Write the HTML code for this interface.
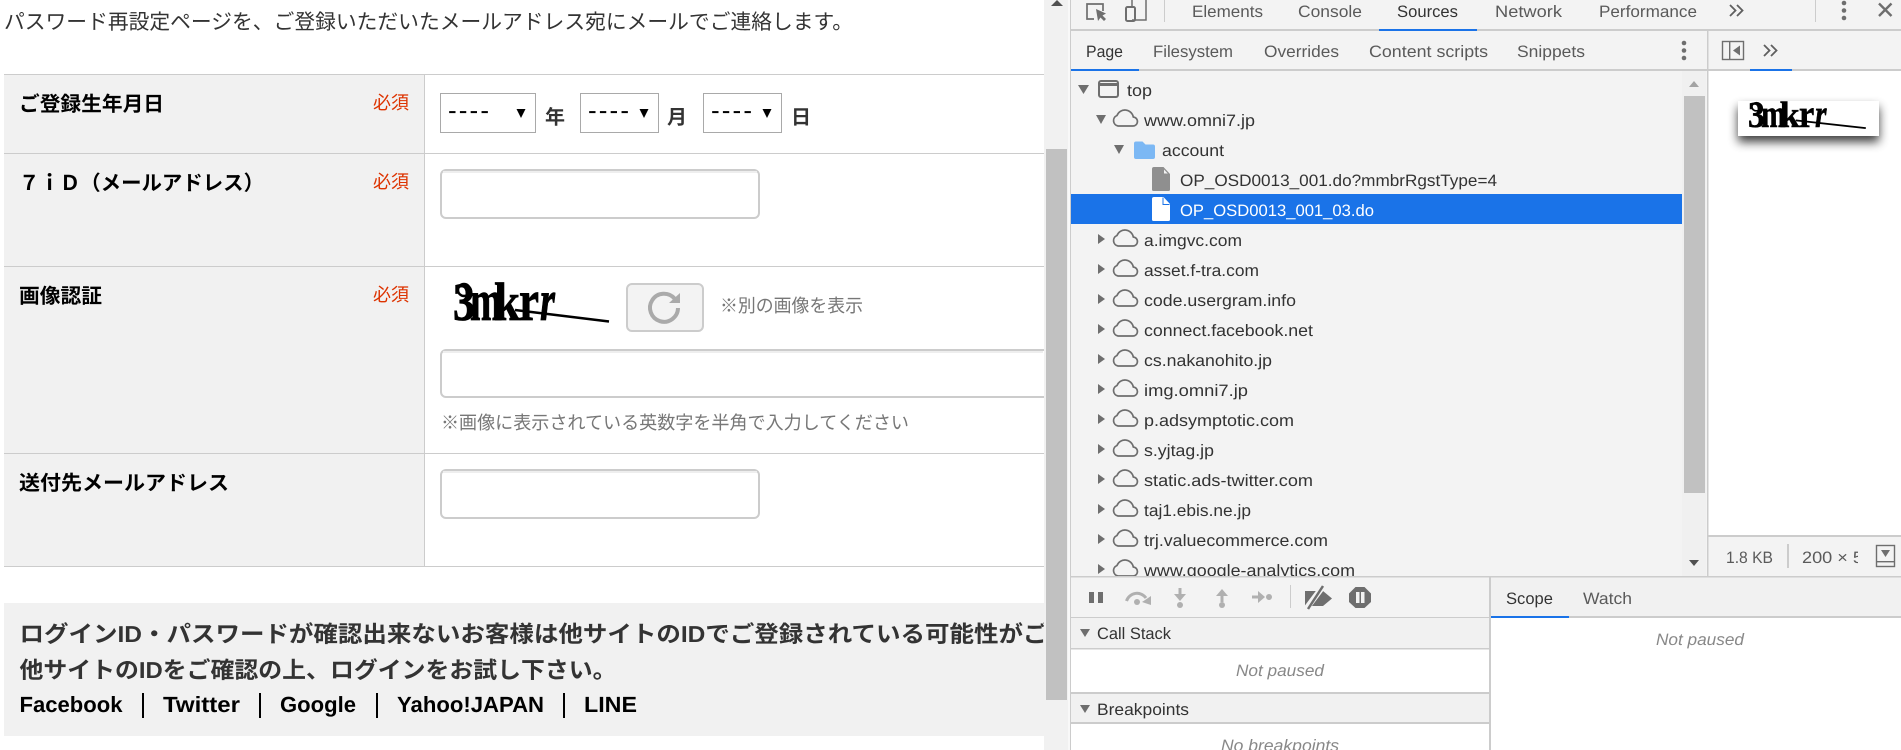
<!DOCTYPE html>
<html lang="ja"><head><meta charset="utf-8"><title>Reference</title>
<style>
html,body{margin:0;padding:0;background:#fff;width:1901px;height:750px;overflow:hidden}
svg{display:block}
text{white-space:pre;text-rendering:geometricPrecision}
.j{font-family:"Liberation Sans","Noto Sans CJK JP",sans-serif}
.b{font-weight:700}
.d{font-family:"Liberation Sans",sans-serif;font-size:16.5px}
.t{fill:#5a5a5a}
.a{fill:#333}
.r{fill:#333}
.n{fill:#888;font-style:italic}
.cl{fill:none;stroke:#6e6e6e;stroke-width:1.7}
</style></head><body>
<svg xmlns="http://www.w3.org/2000/svg" width="1901" height="750" viewBox="0 0 1901 750">
<defs>
<clipPath id="lp"><rect x="0" y="0" width="1044" height="750"/></clipPath>
<clipPath id="tr"><rect x="1071" y="71" width="611" height="505"/></clipPath>
<clipPath id="sz"><rect x="1795" y="540" width="63" height="30"/></clipPath>
</defs>
<rect width="1901" height="750" fill="#fff"/>

<!-- Left page -->
<g clip-path="url(#lp)" class="j">
<text x="4" y="29" font-size="21" fill="#333" textLength="849" lengthAdjust="spacingAndGlyphs">パスワード再設定ページを、ご登録いただいたメールアドレス宛にメールでご連絡します。</text>
<rect x="4" y="74" width="420" height="492" fill="#f1f1f1"/>
<rect x="4" y="74" width="1040" height="1" fill="#ccc"/>
<rect x="4" y="153" width="1040" height="1" fill="#ccc"/>
<rect x="4" y="266" width="1040" height="1" fill="#ccc"/>
<rect x="4" y="453" width="1040" height="1" fill="#ccc"/>
<rect x="4" y="566" width="1040" height="1" fill="#ccc"/>
<rect x="424" y="74" width="1" height="492" fill="#ccc"/>

<text class="b" x="19" y="111" font-size="20.5" fill="#000" textLength="145" lengthAdjust="spacingAndGlyphs">ご登録生年月日</text>
<text class="b" x="19" y="190" font-size="20.5" fill="#000" textLength="245" lengthAdjust="spacingAndGlyphs">７ｉＤ（メールアドレス）</text>
<text class="b" x="19" y="303" font-size="20.5" fill="#000" textLength="83" lengthAdjust="spacingAndGlyphs">画像認証</text>
<text class="b" x="19" y="490" font-size="20.5" fill="#000" textLength="210" lengthAdjust="spacingAndGlyphs">送付先メールアドレス</text>
<text x="373" y="109" font-size="18.5" fill="#dd3300" textLength="36" lengthAdjust="spacingAndGlyphs">必須</text>
<text x="373" y="188" font-size="18.5" fill="#dd3300" textLength="36" lengthAdjust="spacingAndGlyphs">必須</text>
<text x="373" y="301" font-size="18.5" fill="#dd3300" textLength="36" lengthAdjust="spacingAndGlyphs">必須</text>

<!-- selects -->
<rect x="440.5" y="93.5" width="95" height="39" fill="#fff" stroke="#a9a9a9"/>
<rect x="580.5" y="93.5" width="78" height="39" fill="#fff" stroke="#a9a9a9"/>
<rect x="703.5" y="93.5" width="78" height="39" fill="#fff" stroke="#a9a9a9"/>
<text x="448" y="119" font-size="26" fill="#000" textLength="41" lengthAdjust="spacing">----</text>
<text x="588" y="119" font-size="26" fill="#000" textLength="41" lengthAdjust="spacing">----</text>
<text x="711" y="119" font-size="26" fill="#000" textLength="41" lengthAdjust="spacing">----</text>
<polygon points="516.5,109 525.5,109 521,118" fill="#000"/>
<polygon points="639.5,109 648.5,109 644,118" fill="#000"/>
<polygon points="762.5,109 771.5,109 767,118" fill="#000"/>
<text class="b" x="545" y="124" font-size="20" fill="#333">年</text>
<text class="b" x="667" y="124" font-size="20" fill="#333">月</text>
<text class="b" x="791" y="124" font-size="20" fill="#333">日</text>

<!-- inputs -->
<rect x="441" y="170" width="318" height="48" rx="5" fill="#fff" stroke="#ccc" stroke-width="2"/>
<rect x="443" y="171" width="314" height="2" fill="#eee"/>
<rect x="441" y="350" width="660" height="47" rx="5" fill="#fff" stroke="#ccc" stroke-width="2"/>
<rect x="443" y="351" width="600" height="2" fill="#eee"/>
<rect x="441" y="470" width="318" height="48" rx="5" fill="#fff" stroke="#ccc" stroke-width="2"/>
<rect x="443" y="471" width="314" height="2" fill="#eee"/>

<!-- captcha -->
<g fill="#000" stroke="#000" stroke-width=".8" font-family="'Liberation Serif',serif" font-weight="700">
<text x="453" y="320" font-size="54" textLength="22" lengthAdjust="spacingAndGlyphs">3</text>
<text x="470" y="320" font-size="58" textLength="32" lengthAdjust="spacingAndGlyphs">m</text>
<text x="494" y="320" font-size="54" textLength="26" lengthAdjust="spacingAndGlyphs">k</text>
<text x="519" y="320" font-size="58" textLength="20" lengthAdjust="spacingAndGlyphs">r</text>
<text x="540" y="320" font-size="58" font-style="italic" textLength="15" lengthAdjust="spacingAndGlyphs">r</text>
</g>
<ellipse cx="464" cy="290" rx="6" ry="6" fill="none" stroke="#000" stroke-width="2.4"/>
<line x1="515" y1="310" x2="609" y2="321.500" stroke="#000" stroke-width="2.600"/>

<!-- refresh button -->
<rect x="627" y="284" width="76" height="47" rx="5" fill="#f3f3f3" stroke="#ccc" stroke-width="2"/>
<path d="M674.500 298.500A14 14 0 1 0 678 308" fill="none" stroke="#aaa" stroke-width="4"/>
<polygon points="669,303 680,303 680,293" fill="#aaa"/>
<text x="720" y="312" font-size="18.5" fill="#777" textLength="143" lengthAdjust="spacingAndGlyphs">※別の画像を表示</text>
<text x="441" y="429" font-size="18.5" fill="#777" textLength="468" lengthAdjust="spacingAndGlyphs">※画像に表示されている英数字を半角で入力してください</text>

<!-- notice box -->
<rect x="4" y="603" width="1040" height="133" fill="#f1f1f1"/>
<text class="b" x="19.500" y="642" font-size="23" fill="#333" textLength="1028" lengthAdjust="spacingAndGlyphs">ログインID・パスワードが確認出来ないお客様は他サイトのIDでご登録されている可能性がご</text>
<text class="b" x="19.500" y="678" font-size="23" fill="#333" textLength="597" lengthAdjust="spacingAndGlyphs">他サイトのIDをご確認の上、ログインをお試し下さい。</text>
<g font-size="22" font-weight="700" fill="#000">
<text x="19.500" y="712" textLength="103" lengthAdjust="spacingAndGlyphs">Facebook</text>
<rect x="142" y="693" width="2" height="25"/>
<text x="163" y="712" textLength="77" lengthAdjust="spacingAndGlyphs">Twitter</text>
<rect x="259" y="693" width="2" height="25"/>
<text x="280" y="712" textLength="76" lengthAdjust="spacingAndGlyphs">Google</text>
<rect x="376" y="693" width="2" height="25"/>
<text x="397" y="712" textLength="147" lengthAdjust="spacingAndGlyphs">Yahoo!JAPAN</text>
<rect x="563" y="693" width="2" height="25"/>
<text x="584" y="712" textLength="53" lengthAdjust="spacingAndGlyphs">LINE</text>
</g>
</g>

<!-- page scrollbar -->
<rect x="1044" y="0" width="24" height="750" fill="#f1f1f1"/>
<rect x="1046" y="149" width="21" height="551" fill="#c1c1c1"/>
<polygon points="1051,6 1063,6 1057,0" fill="#505050"/>
<rect x="1068" y="0" width="2" height="750" fill="#f8f8f8"/>
<rect x="1070" y="0" width="1.500" height="750" fill="#ccc"/>

<!-- DevTools background -->
<rect x="1071" y="0" width="830" height="750" fill="#f3f3f3"/>
<rect x="1071" y="29" width="830" height="2" fill="#ccc"/>
<rect x="1379" y="29" width="98" height="2" fill="#1a73e8"/>
<rect x="1071" y="69" width="830" height="2" fill="#ccc"/>
<rect x="1071" y="69" width="68" height="2" fill="#1a73e8"/>
<rect x="1750" y="69" width="42" height="2" fill="#1a73e8"/>

<!-- inspect icon -->
<path d="M1094 19H1087V4H1103V11" fill="none" stroke="#6e6e6e" stroke-width="1.700"/>
<path d="M1096 9L1098 21L1100.500 17.500L1104 21L1106 19L1102.500 15.500L1106 13.500Z" fill="#6e6e6e"/>
<!-- device icon -->
<path d="M1132 20H1146V0M1132 0V6" fill="none" stroke="#6e6e6e" stroke-width="1.500"/>
<rect x="1126" y="7" width="9" height="14" rx="1.500" fill="none" stroke="#6e6e6e" stroke-width="2"/>
<rect x="1164" y="0" width="1" height="22" fill="#ccc"/>

<g class="d t">
<text x="1192" y="17" textLength="71" lengthAdjust="spacingAndGlyphs">Elements</text>
<text x="1298" y="17" textLength="64" lengthAdjust="spacingAndGlyphs">Console</text>
<text x="1397" y="17" textLength="61" lengthAdjust="spacingAndGlyphs" fill="#333">Sources</text>
<text x="1495" y="17" textLength="67" lengthAdjust="spacingAndGlyphs">Network</text>
<text x="1599" y="17" textLength="98" lengthAdjust="spacingAndGlyphs">Performance</text>
<text x="1086" y="57" textLength="37" lengthAdjust="spacingAndGlyphs" fill="#333">Page</text>
<text x="1153" y="57" textLength="80" lengthAdjust="spacingAndGlyphs">Filesystem</text>
<text x="1264" y="57" textLength="75" lengthAdjust="spacingAndGlyphs">Overrides</text>
<text x="1369" y="57" textLength="119" lengthAdjust="spacingAndGlyphs">Content scripts</text>
<text x="1517" y="57" textLength="68" lengthAdjust="spacingAndGlyphs">Snippets</text>
</g>
<!-- top right icons -->
<path d="M1730 5L1735.500 10.500L1730 16M1737 5L1742.500 10.500L1737 16" fill="none" stroke="#5f5f5f" stroke-width="1.800"/>
<rect x="1815" y="0" width="1" height="22" fill="#ccc"/>
<circle cx="1844" cy="3" r="2.300" fill="#6e6e6e"/><circle cx="1844" cy="10.500" r="2.300" fill="#6e6e6e"/><circle cx="1844" cy="18" r="2.300" fill="#6e6e6e"/>
<path d="M1879 3.500L1891.500 16M1891.500 3.500L1879 16" stroke="#6e6e6e" stroke-width="2.400" fill="none"/>
<circle cx="1684" cy="43" r="2.300" fill="#6e6e6e"/><circle cx="1684" cy="50.500" r="2.300" fill="#6e6e6e"/><circle cx="1684" cy="58" r="2.300" fill="#6e6e6e"/>
<rect x="1722.500" y="41.500" width="21" height="18" fill="none" stroke="#6e6e6e" stroke-width="1.400"/>
<rect x="1729" y="42" width="1.400" height="17" fill="#6e6e6e"/>
<polygon points="1733,50.500 1740,45.500 1740,55.500" fill="#6e6e6e"/>
<path d="M1764 45L1769.500 50.500L1764 56M1771 45L1776.500 50.500L1771 56" fill="none" stroke="#5f5f5f" stroke-width="1.800"/>

<!-- tree -->
<rect x="1071" y="194" width="611" height="30" fill="#1a73e8"/>
<g clip-path="url(#tr)">
<polygon points="1078,85 1089,85 1083.500,94" fill="#6e6e6e"/>
<rect x="1099" y="81" width="19" height="16" rx="2" fill="none" stroke="#6e6e6e" stroke-width="2"/>
<rect x="1099" y="83" width="19" height="3" fill="#6e6e6e"/>
<polygon points="1096,115 1106,115 1101,124" fill="#6e6e6e"/>
<polygon points="1114,145 1124,145 1119,154" fill="#6e6e6e"/>
<path d="M1134 143.500a2 2 0 0 1 2-2h6.500l3 3h7.500a2 2 0 0 1 2 2v10.500a2 2 0 0 1-2 2h-17a2 2 0 0 1-2-2z" fill="#7cb8f4"/>
<path d="M1154 167h9.500l6.500 7v15.500a1.500 1.500 0 0 1-1.500 1.500h-15a1.500 1.500 0 0 1-1.500-1.500v-20.500a2 2 0 0 1 2-2z" fill="#8f8f8f"/>
<path d="M1164 169.500l3.800 4h-3.800z" fill="#f3f3f3"/>
<path d="M1154 197h9.500l6.500 7v15.500a1.500 1.500 0 0 1-1.500 1.500h-15a1.500 1.500 0 0 1-1.500-1.500v-20.500a2 2 0 0 1 2-2z" fill="#fff"/>
<path d="M1163 197.500v7h6.500" fill="none" stroke="#1a73e8" stroke-width="1"/>
<g id="clouds">
<path class="cl" transform="translate(1112,110)" d="M6 16h14.500a4.500 4.500 0 0 0 .8-9A8.500 8.500 0 0 0 5 5.500 5.500 5.500 0 0 0 6 16z"/>
<path class="cl" transform="translate(1112,230)" d="M6 16h14.500a4.500 4.500 0 0 0 .8-9A8.500 8.500 0 0 0 5 5.500 5.500 5.500 0 0 0 6 16z"/>
<path class="cl" transform="translate(1112,260)" d="M6 16h14.500a4.500 4.500 0 0 0 .8-9A8.500 8.500 0 0 0 5 5.500 5.500 5.500 0 0 0 6 16z"/>
<path class="cl" transform="translate(1112,290)" d="M6 16h14.500a4.500 4.500 0 0 0 .8-9A8.500 8.500 0 0 0 5 5.500 5.500 5.500 0 0 0 6 16z"/>
<path class="cl" transform="translate(1112,320)" d="M6 16h14.500a4.500 4.500 0 0 0 .8-9A8.500 8.500 0 0 0 5 5.500 5.500 5.500 0 0 0 6 16z"/>
<path class="cl" transform="translate(1112,350)" d="M6 16h14.500a4.500 4.500 0 0 0 .8-9A8.500 8.500 0 0 0 5 5.500 5.500 5.500 0 0 0 6 16z"/>
<path class="cl" transform="translate(1112,380)" d="M6 16h14.500a4.500 4.500 0 0 0 .8-9A8.500 8.500 0 0 0 5 5.500 5.500 5.500 0 0 0 6 16z"/>
<path class="cl" transform="translate(1112,410)" d="M6 16h14.500a4.500 4.500 0 0 0 .8-9A8.500 8.500 0 0 0 5 5.500 5.500 5.500 0 0 0 6 16z"/>
<path class="cl" transform="translate(1112,440)" d="M6 16h14.500a4.500 4.500 0 0 0 .8-9A8.500 8.500 0 0 0 5 5.500 5.500 5.500 0 0 0 6 16z"/>
<path class="cl" transform="translate(1112,470)" d="M6 16h14.500a4.500 4.500 0 0 0 .8-9A8.500 8.500 0 0 0 5 5.500 5.500 5.500 0 0 0 6 16z"/>
<path class="cl" transform="translate(1112,500)" d="M6 16h14.500a4.500 4.500 0 0 0 .8-9A8.500 8.500 0 0 0 5 5.500 5.500 5.500 0 0 0 6 16z"/>
<path class="cl" transform="translate(1112,530)" d="M6 16h14.500a4.500 4.500 0 0 0 .8-9A8.500 8.500 0 0 0 5 5.500 5.500 5.500 0 0 0 6 16z"/>
<path class="cl" transform="translate(1112,560)" d="M6 16h14.500a4.500 4.500 0 0 0 .8-9A8.500 8.500 0 0 0 5 5.500 5.500 5.500 0 0 0 6 16z"/>
</g>
<g fill="#6e6e6e">
<polygon points="1098,234 1098,244 1105,239"/>
<polygon points="1098,264 1098,274 1105,269"/>
<polygon points="1098,294 1098,304 1105,299"/>
<polygon points="1098,324 1098,334 1105,329"/>
<polygon points="1098,354 1098,364 1105,359"/>
<polygon points="1098,384 1098,394 1105,389"/>
<polygon points="1098,414 1098,424 1105,419"/>
<polygon points="1098,444 1098,454 1105,449"/>
<polygon points="1098,474 1098,484 1105,479"/>
<polygon points="1098,504 1098,514 1105,509"/>
<polygon points="1098,534 1098,544 1105,539"/>
<polygon points="1098,564 1098,574 1105,569"/>
</g>
<g class="d r">
<text x="1127" y="96" textLength="25" lengthAdjust="spacingAndGlyphs">top</text>
<text x="1144" y="126" textLength="111" lengthAdjust="spacingAndGlyphs">www.omni7.jp</text>
<text x="1162" y="156" textLength="62" lengthAdjust="spacingAndGlyphs">account</text>
<text x="1180" y="186" textLength="317" lengthAdjust="spacingAndGlyphs">OP_OSD0013_001.do?mmbrRgstType=4</text>
<text x="1180" y="216" textLength="194" lengthAdjust="spacingAndGlyphs" fill="#fff">OP_OSD0013_001_03.do</text>
<text x="1144" y="246" textLength="98" lengthAdjust="spacingAndGlyphs">a.imgvc.com</text>
<text x="1144" y="276" textLength="115" lengthAdjust="spacingAndGlyphs">asset.f-tra.com</text>
<text x="1144" y="306" textLength="152" lengthAdjust="spacingAndGlyphs">code.usergram.info</text>
<text x="1144" y="336" textLength="169" lengthAdjust="spacingAndGlyphs">connect.facebook.net</text>
<text x="1144" y="366" textLength="128" lengthAdjust="spacingAndGlyphs">cs.nakanohito.jp</text>
<text x="1144" y="396" textLength="104" lengthAdjust="spacingAndGlyphs">img.omni7.jp</text>
<text x="1144" y="426" textLength="150" lengthAdjust="spacingAndGlyphs">p.adsymptotic.com</text>
<text x="1144" y="456" textLength="70" lengthAdjust="spacingAndGlyphs">s.yjtag.jp</text>
<text x="1144" y="486" textLength="169" lengthAdjust="spacingAndGlyphs">static.ads-twitter.com</text>
<text x="1144" y="516" textLength="107" lengthAdjust="spacingAndGlyphs">taj1.ebis.ne.jp</text>
<text x="1144" y="546" textLength="184" lengthAdjust="spacingAndGlyphs">trj.valuecommerce.com</text>
<text x="1144" y="576" textLength="211" lengthAdjust="spacingAndGlyphs">www.google-analytics.com</text>
</g>
</g>
<!-- tree scrollbar -->
<rect x="1682" y="71" width="24" height="505" fill="#f0f0f0"/>
<rect x="1684" y="96" width="21" height="397" fill="#c1c1c1"/>
<polygon points="1689,87 1699,87 1694,81" fill="#a3a3a3"/>
<polygon points="1689,560 1699,560 1694,566" fill="#505050"/>

<!-- preview pane -->
<rect x="1707" y="31" width="1.500" height="545" fill="#ccc"/>
<rect x="1708.500" y="71" width="192.500" height="464" fill="#fff"/>
<rect x="1750" y="69" width="42" height="2" fill="#1a73e8"/>
<rect x="1708" y="535" width="193" height="2" fill="#ccc"/>
<defs><filter id="sh" x="-30%" y="-100%" width="160%" height="300%"><feGaussianBlur stdDeviation="5"/></filter></defs>
<rect x="1738" y="107" width="141" height="35" fill="#000" opacity=".75" filter="url(#sh)"/>
<rect x="1738" y="101" width="141" height="35" fill="#fff"/>
<g transform="translate(1748,102) scale(.77,.68)">
<g fill="#000" stroke="#000" stroke-width=".8" font-family="'Liberation Serif',serif" font-weight="700">
<text x="0" y="37" font-size="54" textLength="22" lengthAdjust="spacingAndGlyphs">3</text>
<text x="17" y="37" font-size="58" textLength="32" lengthAdjust="spacingAndGlyphs">m</text>
<text x="41" y="37" font-size="54" textLength="26" lengthAdjust="spacingAndGlyphs">k</text>
<text x="66" y="37" font-size="58" textLength="20" lengthAdjust="spacingAndGlyphs">r</text>
<text x="87" y="37" font-size="58" font-style="italic" textLength="15" lengthAdjust="spacingAndGlyphs">r</text>
</g>
<ellipse cx="11" cy="7" rx="6" ry="6" fill="none" stroke="#000" stroke-width="2.400"/>
<line x1="62" y1="27" x2="153" y2="38.500" stroke="#000" stroke-width="2.600"/>
</g>
<g class="d t">
<text x="1726" y="563" textLength="47" lengthAdjust="spacingAndGlyphs">1.8 KB</text>
<rect x="1787" y="544" width="2" height="24" fill="#ccc"/>
<g clip-path="url(#sz)"><text x="1802" y="563" textLength="71" lengthAdjust="spacingAndGlyphs">200 × 50</text></g>
</g>
<rect x="1876.500" y="545.500" width="18" height="21" fill="none" stroke="#6e6e6e" stroke-width="1.400"/>
<rect x="1877" y="561" width="18" height="1.400" fill="#6e6e6e"/>
<polygon points="1881,550 1890,550 1885.500,557" fill="#6e6e6e"/>

<!-- lower separators -->
<rect x="1071" y="576" width="830" height="1.500" fill="#ccc"/>
<rect x="1489" y="577" width="2" height="173" fill="#ccc"/>
<rect x="1071" y="617" width="418" height="1.500" fill="#ccc"/>

<!-- debugger toolbar -->
<rect x="1089" y="592" width="5" height="11" fill="#6e6e6e"/>
<rect x="1098" y="592" width="5" height="11" fill="#6e6e6e"/>
<path d="M1126.500 601A11 11 0 0 1 1146 598" fill="none" stroke="#b0b0b0" stroke-width="3"/>
<polygon points="1142,602 1151,596 1151,605" fill="#b0b0b0"/>
<circle cx="1137" cy="602" r="3" fill="#b0b0b0"/>
<rect x="1178.500" y="588" width="3" height="9" fill="#b0b0b0"/>
<polygon points="1174,594 1186,594 1180,601" fill="#b0b0b0"/>
<circle cx="1180" cy="605" r="3" fill="#b0b0b0"/>
<rect x="1220.500" y="594" width="3" height="8" fill="#b0b0b0"/>
<polygon points="1216,596 1228,596 1222,589" fill="#b0b0b0"/>
<circle cx="1222" cy="605" r="3" fill="#b0b0b0"/>
<rect x="1252" y="595.500" width="8" height="3" fill="#b0b0b0"/>
<polygon points="1258,591 1258,603 1265,597" fill="#b0b0b0"/>
<circle cx="1269" cy="597" r="3" fill="#b0b0b0"/>
<rect x="1290" y="585" width="1" height="23" fill="#ccc"/>
<path d="M1305 591H1323L1332 598.500L1323 606H1305Z" fill="#6e6e6e"/>
<path d="M1306 609L1324 585" stroke="#f3f3f3" stroke-width="6"/>
<path d="M1308 609L1323 586" stroke="#6e6e6e" stroke-width="2.500"/>
<polygon points="1355.500,587 1364.500,587 1371,593.500 1371,602 1364.500,608 1355.500,608 1349,602 1349,593.500" fill="#6e6e6e"/>
<rect x="1356" y="592" width="3.500" height="11" fill="#f3f3f3"/>
<rect x="1361" y="592" width="3.500" height="11" fill="#f3f3f3"/>

<!-- left panes -->
<rect x="1071" y="618" width="418" height="30" fill="#f1f1f1"/>
<polygon points="1080,629 1090,629 1085,637" fill="#6e6e6e"/>
<text class="d" x="1097" y="639" fill="#333" textLength="74" lengthAdjust="spacingAndGlyphs">Call Stack</text>
<rect x="1071" y="648" width="418" height="1.500" fill="#ccc"/>
<rect x="1071" y="649.500" width="418" height="43" fill="#fff"/>
<text class="d n" x="1236" y="676" textLength="88" lengthAdjust="spacingAndGlyphs">Not paused</text>
<rect x="1071" y="692" width="418" height="2" fill="#ccc"/>
<rect x="1071" y="694" width="418" height="28" fill="#f1f1f1"/>
<polygon points="1080,705 1090,705 1085,713" fill="#6e6e6e"/>
<text class="d" x="1097" y="715" fill="#333" textLength="92" lengthAdjust="spacingAndGlyphs">Breakpoints</text>
<rect x="1071" y="722" width="418" height="2" fill="#ccc"/>
<rect x="1071" y="724" width="418" height="26" fill="#fff"/>
<text class="d n" x="1221" y="751" textLength="118" lengthAdjust="spacingAndGlyphs">No breakpoints</text>

<!-- right pane -->
<rect x="1491" y="577.500" width="410" height="38.500" fill="#f1f1f1"/>
<text class="d" x="1506" y="604" fill="#333" textLength="47" lengthAdjust="spacingAndGlyphs">Scope</text>
<text class="d t" x="1583" y="604" textLength="49" lengthAdjust="spacingAndGlyphs">Watch</text>
<rect x="1491" y="616" width="410" height="2" fill="#ccc"/>
<rect x="1491" y="616" width="78" height="2" fill="#1a73e8"/>
<rect x="1491" y="618" width="410" height="132" fill="#fff"/>
<text class="d n" x="1656" y="645" textLength="88" lengthAdjust="spacingAndGlyphs">Not paused</text>
</svg>
</body></html>
